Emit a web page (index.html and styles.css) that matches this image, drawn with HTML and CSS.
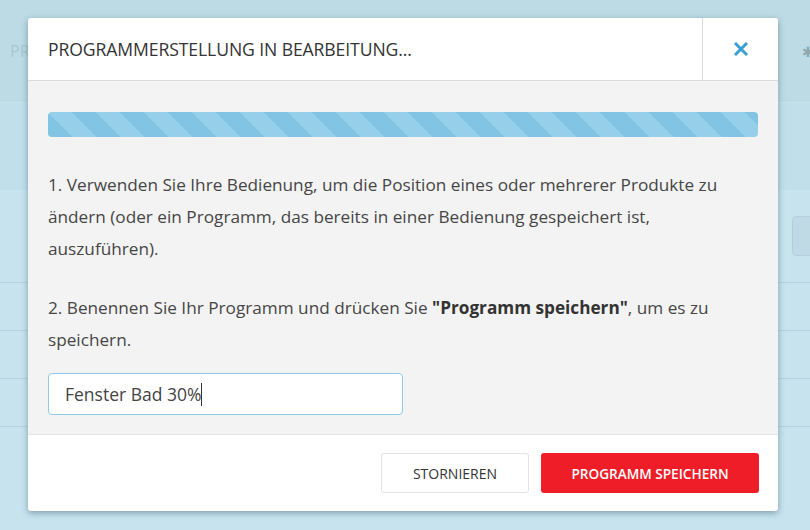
FILE: index.html
```html
<!DOCTYPE html>
<html lang="de">
<head>
<meta charset="utf-8">
<link rel="stylesheet" href="styles.css">
</head>
<body>
<div class="app">
  <div class="app-top"><span class="app-title">PROGRAMME</span><span class="app-gear">✱</span></div>
  <div class="app-band"></div>
  <div class="app-row app-row-first"><span class="app-btn"></span></div>
  <div class="app-row"></div>
  <div class="app-row"></div>
  <div class="app-row"></div>
  <div class="app-row app-row-last"><span class="toggle"></span><span class="toggle-label">Aus</span></div>
</div>
<div class="overlay">
  <div class="modal">
    <div class="modal-header">
      <h1 class="modal-title">PROGRAMMERSTELLUNG IN BEARBEITUNG...</h1>
      <button class="modal-close" aria-label="Schließen">
        <svg width="14" height="14" viewBox="0 0 14 14"><path d="M2 2 L12 12 M12 2 L2 12" stroke="#3a9fd0" stroke-width="3" stroke-linecap="square"/></svg>
      </button>
    </div>
    <div class="modal-body">
      <div class="progress"></div>
      <p class="step step-one">1. Verwenden Sie Ihre Bedienung, um die Position eines oder mehrerer Produkte zu ändern (oder ein Programm, das bereits in einer Bedienung gespeichert ist, auszuführen).</p>
      <p class="step step-two">2. Benennen Sie Ihr Programm und drücken Sie <strong>"Programm speichern"</strong>, um es zu speichern.</p>
      <div class="field"><span class="field-text">Fenster Bad 30%</span><span class="caret"></span></div>
    </div>
    <div class="modal-footer">
      <button class="btn btn-cancel">STORNIEREN</button>
      <button class="btn btn-save">PROGRAMM SPEICHERN</button>
    </div>
  </div>
</div>
</body>
</html>
```
FILE: styles.css
```css
* { box-sizing: border-box; }
html, body { margin: 0; padding: 0; }
body {
  width: 810px;
  height: 530px;
  overflow: hidden;
  position: relative;
  font-family: "Open Sans", sans-serif;
  background: #c6e3ee;
}
.app { width: 810px; height: 530px; }
.app-top {
  height: 103px;
  background: #bcdbe5;
  border-bottom: 1px solid #c9e2ea;
  display: flex;
  justify-content: space-between;
  align-items: center;
  padding: 0 0 0 10px;
  color: #a9c7d1;
  font-size: 16px;
}
.app-gear { margin-right: -4px; font-size: 14px; color: #8fa7ae; }
.app-band { height: 87px; background: #c0dfea; }
.app-row {
  height: 48px;
  border-bottom: 1px solid #b4d3de;
  display: flex;
  align-items: center;
  justify-content: flex-end;
}
.app-row-first { height: 93px; }
.app-btn {
  width: 30px; height: 40px; margin-right: -12px;
  background: #bfd9e5; border: 1px solid #b4cfdb; border-radius: 4px;
}
.app-row-last { border-bottom: none; justify-content: flex-start; padding-left: 570px; }
.toggle { width: 48px; height: 24px; border: 1px solid #a8c6d2; border-radius: 12px; }
.toggle-label { margin-left: 8px; color: #8aa5b0; font-size: 16px; }

.overlay {
  position: absolute;
  inset: 0;
  padding: 18px 0 0 28px;
}
.modal {
  width: 750px;
  background: #fff;
  border-radius: 3px;
  box-shadow: 0 2px 6px rgba(40, 70, 90, 0.45);
  overflow: hidden;
}
.modal-header {
  display: flex;
  height: 63px;
  border-bottom: 1px solid #dcdcdc;
}
.modal-title {
  flex: 1;
  margin: 0;
  padding: 0 0 0 20px;
  display: flex;
  align-items: center;
  font-size: 17.6px;
  font-weight: 400;
  color: #333;
  letter-spacing: -0.1px;
}
.modal-close {
  width: 76px;
  border: none;
  border-left: 1px solid #dcdcdc;
  background: #fff;
  display: flex;
  align-items: center;
  justify-content: center;
  padding: 0;
}
.modal-body {
  background: #f3f3f3;
  padding: 31px 20px 19px 20px;
}
.progress {
  height: 25px;
  border-radius: 4px;
  background-color: #82c4e4;
  background-image: repeating-linear-gradient(45deg, #82c4e4 0, #82c4e4 17px, #96cfea 17px, #96cfea 34px);
  margin-bottom: 32px;
}
.step {
  margin: 0;
  font-size: 17.2px;
  line-height: 32px;
  color: #464646;
}
.step-one { margin-bottom: 27px; }
.step-two { margin-bottom: 17px; }
.step strong { font-weight: 700; color: #333; }
.field {
  width: 355px;
  height: 42px;
  background: #fff;
  border: 1px solid #8ccbea;
  border-radius: 4px;
  display: flex;
  align-items: center;
  padding-left: 16px;
  font-size: 17.5px;
  color: #444;
}
.caret { width: 1px; height: 23px; background: #333; }
.modal-footer {
  border-top: 1px solid #e3e3e3;
  height: 77px;
  display: flex;
  justify-content: flex-end;
  align-items: flex-start;
  padding: 18px 19px 0 0;
  gap: 12px;
}
.btn {
  height: 40px;
  border-radius: 3px;
  font-family: "Open Sans", sans-serif;
  font-size: 14px;
  padding: 0;
  cursor: pointer;
}
.btn-cancel {
  width: 148px;
  background: #fff;
  border: 1px solid #e3e3e3;
  color: #333;
}
.btn-save {
  width: 218px;
  background: #ee1d27;
  border: none;
  color: #fff;
  font-weight: 600;
  font-size: 13.6px;
}
```
